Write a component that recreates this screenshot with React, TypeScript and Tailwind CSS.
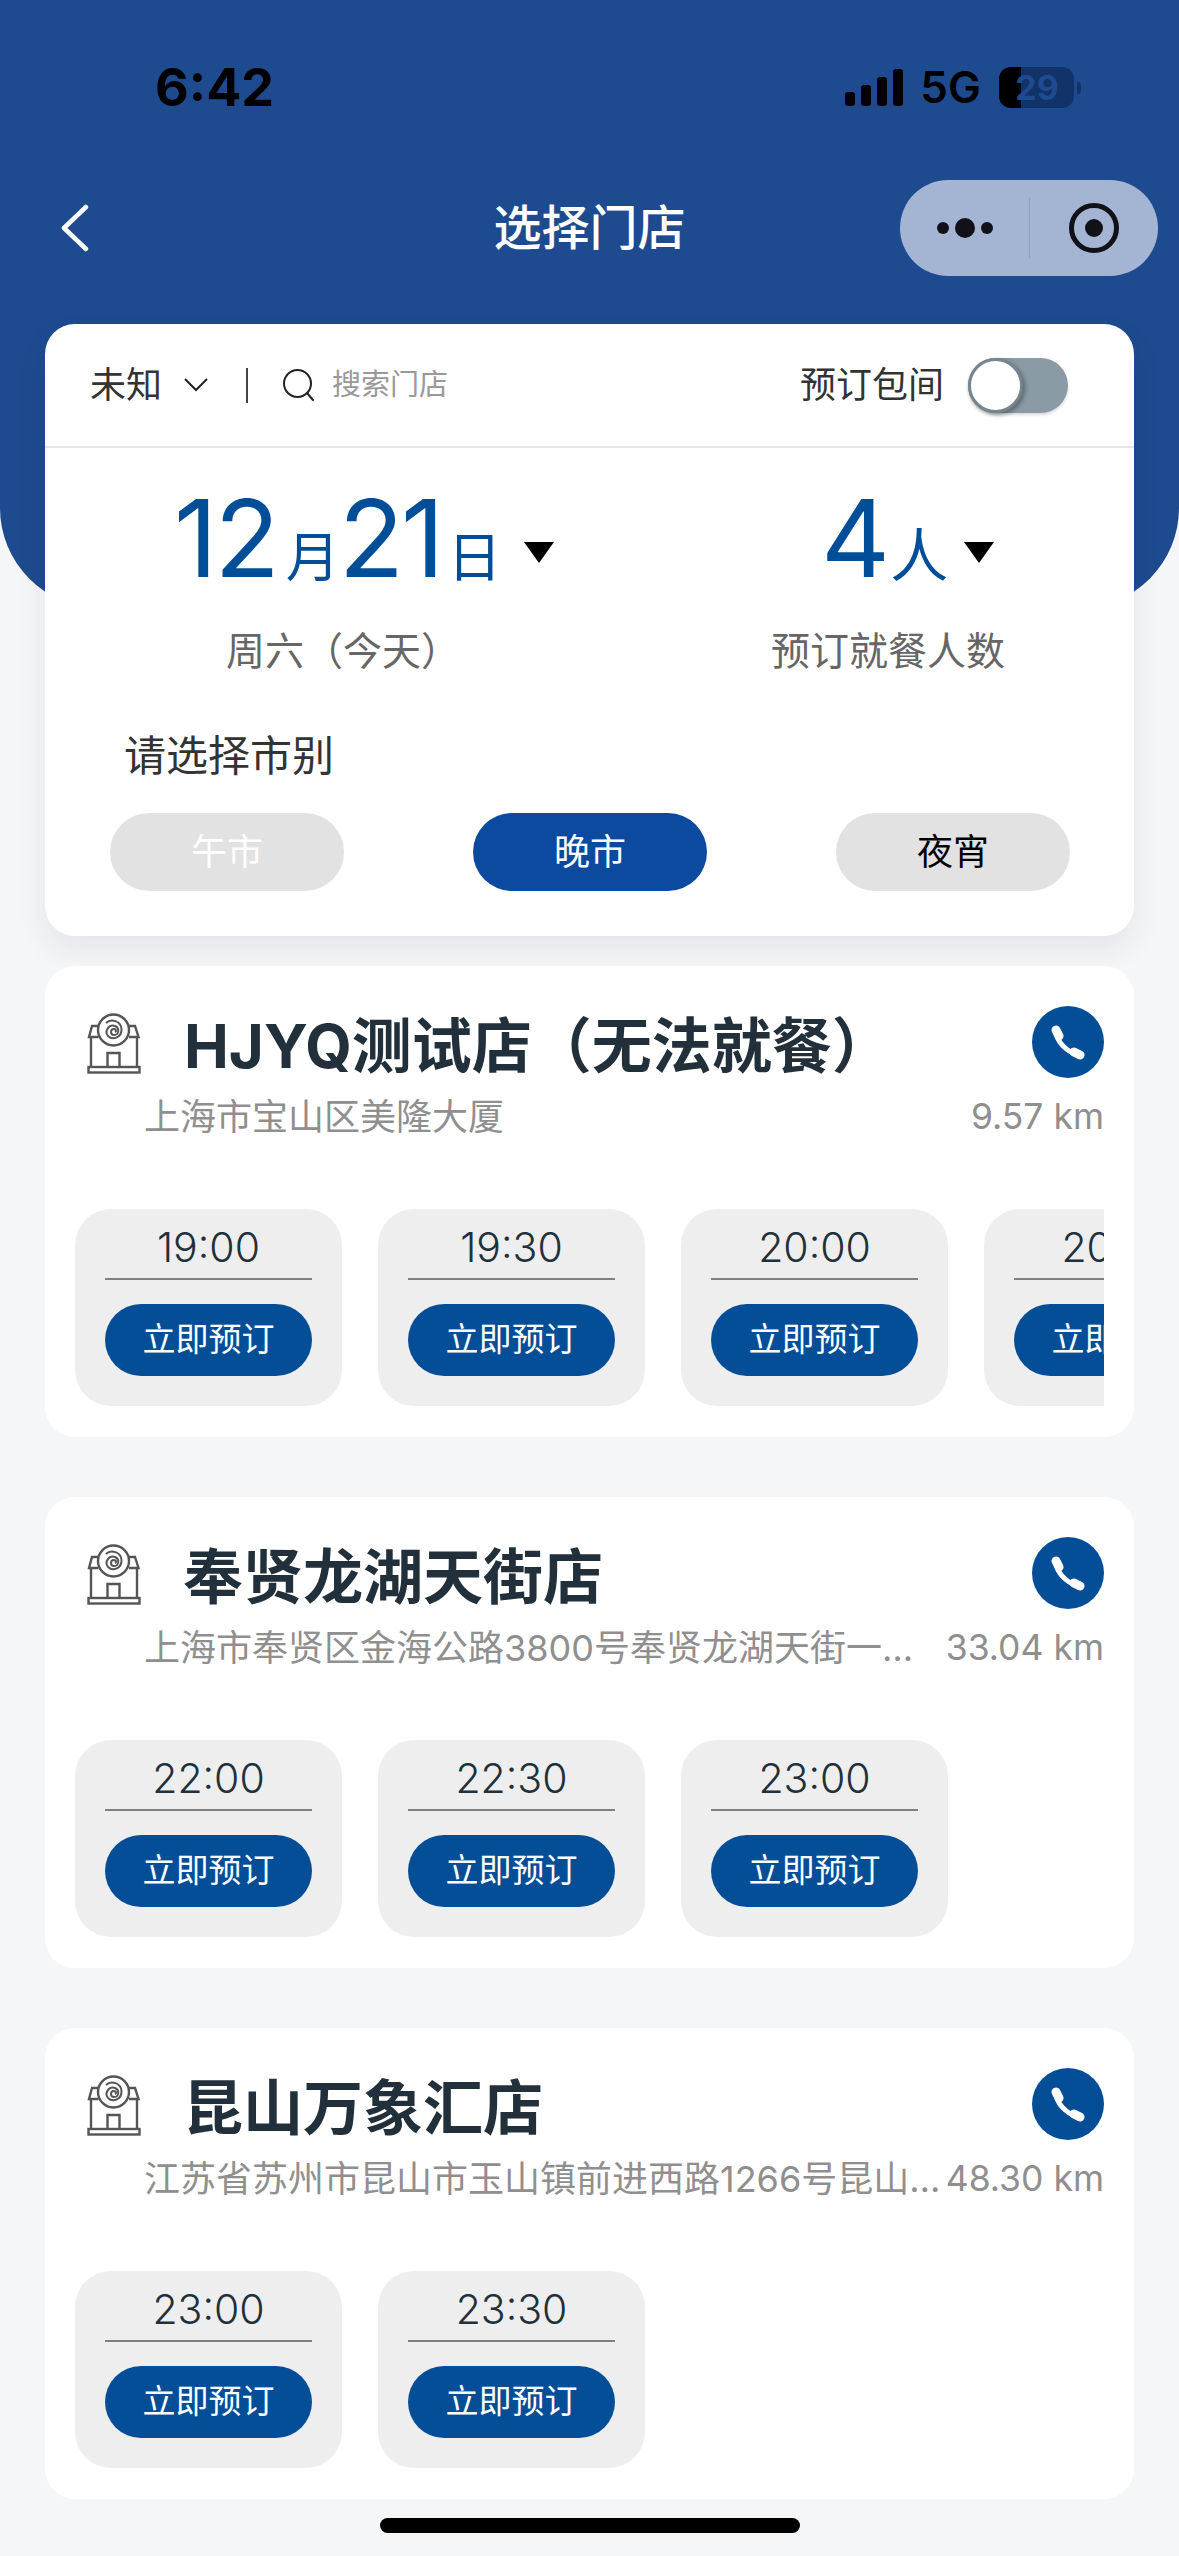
import React from 'react'

type Store = {
  name: string
  address: string
  distance: string
  times: string[]
  titleGap: string
}

const stores: Store[] = [
  { name: 'HJYQ测试店（无法就餐）', address: '上海市宝山区美隆大厦', distance: '9.57 km', times: ['19:00', '19:30', '20:00', '20:30'], titleGap: 'ml-[43px]' },
  { name: '奉贤龙湖天街店', address: '上海市奉贤区金海公路3800号奉贤龙湖天街一层L1-12号商铺', distance: '33.04 km', times: ['22:00', '22:30', '23:00'], titleGap: 'ml-[42px]' },
  { name: '昆山万象汇店', address: '江苏省苏州市昆山市玉山镇前进西路1266号昆山万象汇商场四层', distance: '48.30 km', times: ['23:00', '23:30'], titleGap: 'ml-[42px]' },
]

const StoreIcon = () => (
  <svg width="54" height="62" viewBox="0 0 54 62" fill="none" stroke="#555" strokeWidth="2.4" className="shrink-0">
    <circle cx="26.500" cy="17" r="15.500" />
    <path d="M11 13H5L2 24H11.500M42 13H48L51.500 24H42" />
    <path d="M4 24V54M50 24V54" />
    <path d="M20.500 54V40H32.500V54" />
    <rect x="1.500" y="54" width="51" height="5.500" />
    <path d="M19 10C24 5 34 8 34.500 16C35 24 26 28 21 23C17 18 22 11 28 13C33 15 32 22 27 22C23 22 23 16 27 16C29 16 30 18 28 19" strokeWidth="2" />
  </svg>
)

const PhoneIcon = () => (
  <svg width="36" height="36" viewBox="0 0 36 36" fill="none" stroke="#fff" strokeLinecap="round">
    <path d="M6 8C7 17 15 27 28 31" strokeWidth="5" />
    <path d="M6 6L9 12" strokeWidth="9" />
    <path d="M24 28L30 31" strokeWidth="9" />
  </svg>
)

const StatusBar = () => (
  <div className="flex h-[180px] items-start text-black">
    <span className="ml-[155px] mt-[60px] text-[52px] leading-[56px] font-bold">6:42</span>
    <div className="ml-auto mr-[98px] mt-[67px] flex h-[41px] items-center">
      <div className="flex items-end gap-[6px] self-end mb-[2px]">
        <div className="h-[14px] w-[10px] rounded-[3px] bg-black" />
        <div className="h-[21px] w-[10px] rounded-[3px] bg-black" />
        <div className="h-[29px] w-[10px] rounded-[3px] bg-black" />
        <div className="h-[37px] w-[10px] rounded-[3px] bg-black" />
      </div>
      <span className="ml-[17px] text-[44px] leading-[41px] font-semibold">5G</span>
      <div className="relative ml-[18px] h-[41px] w-[75px] overflow-hidden rounded-[12px] bg-[#12326a]">
        <div className="h-full w-[22px] bg-black" />
        <span className="absolute inset-0 flex items-center justify-center pl-[1px] text-[34px] font-bold text-[#1e4a8f]">29</span>
      </div>
      <div className="ml-[3px] h-[12px] w-[4px] rounded-r-full bg-[#12326a]" />
    </div>
  </div>
)

const NavBar = () => (
  <div className="relative flex h-[96px] items-center">
    <svg width="30" height="48" viewBox="0 0 30 48" fill="none" stroke="#fff" strokeWidth="4.500" strokeLinecap="round" strokeLinejoin="round" className="ml-[60px]">
      <path d="M26 3L4 24L26 45" />
    </svg>
    <span className="absolute left-0 right-0 text-center text-[48px] leading-[96px] font-medium text-white">选择门店</span>
    <div className="absolute left-[900px] flex h-[96px] w-[258px] items-center rounded-full bg-[#a4b5d4]">
      <div className="flex w-[129px] items-center justify-end gap-[6px] pr-[36px]">
        <div className="size-[12px] rounded-full bg-[#111218]" />
        <div className="size-[20px] rounded-full bg-[#111218]" />
        <div className="size-[12px] rounded-full bg-[#111218]" />
      </div>
      <div className="h-[60px] w-px bg-[#8f9fc0]" />
      <div className="ml-[39px] flex size-[50px] items-center justify-center rounded-full border-[5px] border-[#111218]">
        <div className="size-[18px] rounded-full bg-[#111218]" />
      </div>
    </div>
  </div>
)

const Triangle = () => (
  <div className="h-0 w-0 border-x-[15px] border-t-[21px] border-x-transparent border-t-black" />
)

const SearchCard = () => (
  <div className="mx-[45px] mt-[48px] h-[612px] rounded-[30px] bg-white shadow-[0_14px_30px_rgba(30,40,70,0.08)]">
    <div className="flex h-[124px] items-center border-b-2 border-[#e6e7e9]">
      <span className="ml-[45px] text-[36px] text-[#333]">未知</span>
      <svg width="24" height="14" viewBox="0 0 24 14" fill="none" stroke="#222" strokeWidth="2" className="ml-[22px]">
        <path d="M1 1L12 12L23 1" />
      </svg>
      <div className="ml-[38px] h-[35px] w-[2px] bg-[#444]" />
      <svg width="34" height="34" viewBox="0 0 34 34" fill="none" stroke="#222" strokeWidth="2" strokeLinecap="round" className="ml-[34px]">
        <circle cx="15.500" cy="15.500" r="13.500" />
        <path d="M25 25L31 32" />
      </svg>
      <span className="ml-[16px] text-[29px] text-[#999]">搜索门店</span>
      <span className="ml-auto text-[36px] text-[#333]">预订包间</span>
      <div className="ml-[24px] mr-[66px] h-[55px] w-[100px] rounded-full bg-[#8a9ba5] shadow-[0_2px_3px_rgba(0,0,0,0.15)]">
        <div className="size-[55px] rounded-full border-[3px] border-[#75868f] bg-white shadow-[2px_2px_4px_rgba(0,0,0,0.35)]" />
      </div>
    </div>
    <div className="flex pt-[40px]">
      <div className="w-[726px]">
        <div className="ml-[129px] flex h-[100px] items-baseline text-[#004e98]">
          <span className="text-[107px] leading-[100px] font-normal tracking-[-3px]">12</span>
          <span className="ml-[9px] text-[54px] leading-[100px]">月</span>
          <span className="ml-[-1px] text-[107px] leading-[100px] font-normal tracking-[-3px]">21</span>
          <span className="ml-[6px] text-[54px] leading-[100px]">日</span>
          <div className="ml-[22px] self-center mt-[28px]"><Triangle /></div>
        </div>
        <div className="ml-[181px] mt-[38px] text-[39px] leading-[50px] text-[#666]">周六（今天）</div>
      </div>
      <div>
        <div className="ml-[50px] flex h-[100px] items-baseline text-[#004e98]">
          <span className="text-[107px] leading-[100px] font-normal">4</span>
          <span className="ml-[0px] text-[58px] leading-[100px]">人</span>
          <div className="ml-[16px] self-center mt-[28px]"><Triangle /></div>
        </div>
        <div className="mt-[38px] text-[39px] leading-[50px] text-[#666]">预订就餐人数</div>
      </div>
    </div>
    <div className="ml-[79px] mt-[55px] text-[42px] leading-[50px] text-[#333]">请选择市别</div>
    <div className="mt-[32px] flex justify-between pl-[65px] pr-[64px]">
      <div className="flex h-[78px] w-[234px] items-center justify-center rounded-full bg-[#e2e2e2] text-[36px] text-white">午市</div>
      <div className="flex h-[78px] w-[234px] items-center justify-center rounded-full bg-[#0c4aa0] text-[36px] text-white">晚市</div>
      <div className="flex h-[78px] w-[234px] items-center justify-center rounded-full bg-[#e2e2e2] text-[36px] text-black">夜宵</div>
    </div>
  </div>
)

const TimeSlot = ({ time }: { time: string }) => (
  <div className="flex h-[197px] w-[267px] shrink-0 flex-col items-center rounded-[36px] bg-[#eeeeee] px-[30px]">
    <div className="flex h-[71px] w-full items-center justify-center border-b-2 border-[#808080] pt-[8px] text-[41px] font-light text-[#21303a]">{time}</div>
    <button className="mt-[24px] flex h-[72px] w-full shrink-0 items-center justify-center rounded-full bg-[#044e98] text-[33px] text-white">立即预订</button>
  </div>
)

const StoreCard = ({ store }: { store: Store }) => (
  <div className="mx-[45px] h-[471px] rounded-[30px] bg-white pl-[30px] pr-[30px]">
    <div className="flex h-[115px] items-end">
      <div className="ml-[12px] mb-[6px]"><StoreIcon /></div>
      <span className={`${store.titleGap} text-[60px] leading-[70px] font-bold whitespace-nowrap text-[#21303a]`}>{store.name}</span>
      <div className="ml-auto mb-[3px] flex size-[72px] items-center justify-center rounded-full bg-[#044e98]"><PhoneIcon /></div>
    </div>
    <div className="mt-[16px] flex h-[40px] items-center text-[36px] text-[#8f8f8f]">
      <span className="ml-[69px] min-w-0 flex-1 truncate">{store.address}</span>
      <span className="shrink-0 text-[35.500px]">{store.distance}</span>
    </div>
    <div className="mt-[72px] flex gap-[36px] overflow-hidden">
      {store.times.map((time) => <TimeSlot key={time} time={time} />)}
    </div>
  </div>
)

export default function App() {
  return (
    <div className="relative h-[2556px] w-[1179px] overflow-hidden bg-[#f5f6f8] font-[Inter,'Noto_Sans_CJK_SC',sans-serif]">
      {/* Blue backdrop behind the header */}
      <div className="absolute inset-x-0 top-0 h-[608px] rounded-b-[100px] bg-[#1e4a8f]" />

      <div className="relative">
        <StatusBar />
        <NavBar />
        <SearchCard />
        <div className="mt-[30px] flex flex-col gap-[60px]">
          {stores.map((store) => <StoreCard key={store.name} store={store} />)}
        </div>
      </div>

      {/* Home indicator */}
      <div className="absolute bottom-[23px] left-[380px] h-[15px] w-[420px] rounded-full bg-black" />
    </div>
  )
}
